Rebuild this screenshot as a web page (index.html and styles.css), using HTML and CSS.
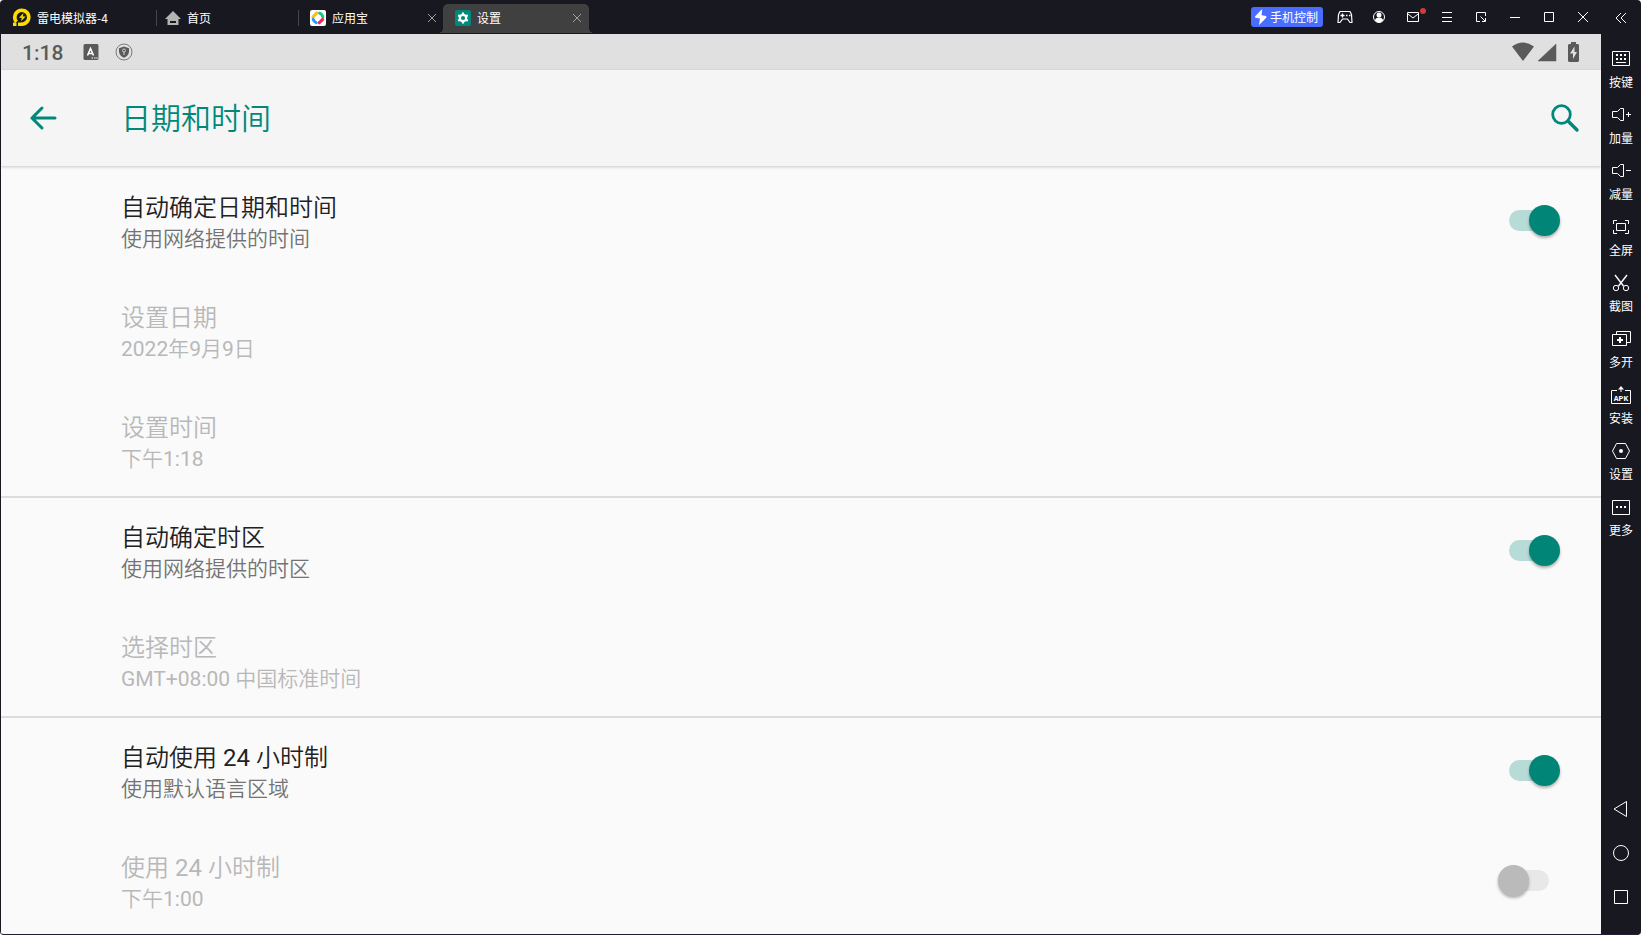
FILE: index.html
```html
<!DOCTYPE html>
<html lang="zh-CN">
<head>
<meta charset="utf-8">
<title>设置</title>
<link rel="stylesheet" href="styles.css">
</head>
<body>
<div class="window">
  <header class="titlebar">
    <div class="brand">
      <svg width="20" height="20" viewBox="0 0 20 20"><path d="M4.500 13.800A7 7 0 1 1 10.500 16.200H9" fill="none" stroke="#ffdc00" stroke-width="3.600"/><path d="M1 14.500h3.500V18H1zM6 14.500h4V18H6z" fill="#ffdc00"/><path d="M11.500 5 7 9.800h2.800L9 13.300 13.700 8.600h-3z" fill="#ffdc00"/></svg>
      <span>雷电模拟器-4</span>
    </div>
    <nav class="tabs">
      <div class="tab tab-home">
        <svg width="16" height="16" viewBox="0 0 16 16"><path d="M8 1 0 9h2.500v6h11V9H16z" fill="#b4b4b4"/><path d="M5 12h6" stroke="#171820" stroke-width="2"/></svg>
        <span>首页</span>
      </div>
      <div class="tab tab-store">
        <svg width="16" height="16" viewBox="0 0 16 16"><rect width="16" height="16" rx="2" fill="#fff"/><path d="M3 6.800 6.800 3" stroke="#ffc400" stroke-width="3.200" stroke-linecap="round"/><path d="M9.600 3.200A5 5 0 0 1 12.800 7" stroke="#12c98a" stroke-width="3" fill="none" stroke-linecap="round"/><path d="M12.600 9.500 9.300 12.700" stroke="#f3265d" stroke-width="3.200" stroke-linecap="round"/><path d="M3.200 9.300A5 5 0 0 0 6.200 12.600" stroke="#2497ff" stroke-width="3" fill="none" stroke-linecap="round"/><path d="M8 4.500 11.500 8 8 11.500 4.500 8z" fill="#fff"/></svg>
        <span class="tab-name">应用宝</span>
        <button class="tab-close" aria-label="关闭应用宝"><svg width="10" height="10" viewBox="0 0 10 10"><path d="m1 1 8 8M9 1 1 9"/></svg></button>
      </div>
      <div class="tab tab-active">
        <svg width="16" height="16" viewBox="0 0 16 16"><rect width="16" height="16" rx="2" fill="#00897b"/><circle cx="8" cy="8" r="3.200" fill="none" stroke="#fff" stroke-width="2.200"/><path d="M8 2.500v2M8 11.500v2M3.200 5.200l1.800 1M11 9.800l1.800 1M3.200 10.800l1.800-1M11 6.200l1.800-1" stroke="#fff" stroke-width="2.200"/></svg>
        <span class="tab-name">设置</span>
        <button class="tab-close" aria-label="关闭设置"><svg width="10" height="10" viewBox="0 0 10 10"><path d="m1 1 8 8M9 1 1 9"/></svg></button>
      </div>
    </nav>
    <div class="tools">
      <button class="phone"><svg width="14" height="16" viewBox="0 0 14 16"><path d="M8.200 0 1 7.500l.3 1.300L6 9.600 5 16l7.500-7.600-.4-1.300L7.600 6.200z" fill="#fff"/></svg><span>手机控制</span></button>
      <button class="tool" aria-label="手柄"><svg width="20" height="20" viewBox="0 0 20 20"><path d="M5 4.500h10l1.500 3 .5 8h-2L12.500 12h-5L5 15.500H3l.5-8z" stroke-width="1.200" stroke-linejoin="round"/><path d="M5.500 8.500h4M7.500 6.500v4M11 8.500h1.500M14 8.500h1.500" stroke-width="1.300"/></svg></button>
      <button class="tool" aria-label="账号"><svg width="20" height="20" viewBox="0 0 20 20"><circle cx="10" cy="10" r="5.500"/><circle cx="10" cy="8" r="2.500" fill="#fff" stroke="none"/><path d="M6 13.500c0-4 8-4 8 0-2 2.500-6 2.500-8 0z" fill="#fff" stroke="none"/></svg></button>
      <button class="tool" aria-label="消息"><svg width="20" height="20" viewBox="0 0 20 20"><path d="M4.500 5.500h11v9h-11zM5 7l5 4 5-4"/><circle cx="20" cy="4" r="3" fill="#d03a38" stroke="none"/></svg></button>
      <button class="tool" aria-label="菜单"><svg width="20" height="20" viewBox="0 0 20 20"><path d="M5 5.500h10M5 10.500h10M5 14.500h10"/></svg></button>
      <button class="tool" aria-label="小窗"><svg width="20" height="20" viewBox="0 0 20 20"><path d="M9 14.500H5.500v-9h9V9M9.500 9.500l4.500 4.500M14.500 11v3.500H11"/></svg></button>
      <button class="tool" aria-label="最小化"><svg width="20" height="20" viewBox="0 0 20 20"><path d="M5 10.500h10"/></svg></button>
      <button class="tool" aria-label="最大化"><svg width="20" height="20" viewBox="0 0 20 20"><path d="M5.500 5.500h9v9h-9z"/></svg></button>
      <button class="tool" aria-label="关闭"><svg width="20" height="20" viewBox="0 0 20 20"><path d="m5 5 10 10M15 5 5 15"/></svg></button>
      <button class="tool tool-fold" aria-label="收起"><svg width="20" height="20" viewBox="0 0 20 20"><path d="m10 6-5 5 5 5M15 6l-5 5 5 5"/></svg></button>
    </div>
  </header>

  <div class="body">
    <main class="screen">
      <div class="status">
        <span class="clock">1:18</span>
        <svg class="status-input" width="16" height="16" viewBox="0 0 16 16"><path d="M2 0h12a1.500 1.500 0 0 1 1.500 1.500v13A1.500 1.500 0 0 1 14 16H2a1.500 1.500 0 0 1-1.500-1.500v-13A1.500 1.500 0 0 1 2 0z" fill="#5a5a5a"/><path d="M4.500 11.500 7.500 4.500l3 7M5.500 9.500h4" fill="none" stroke="#fff" stroke-width="1.600"/><path d="M8.500 14h1.500M11 14h1.500M13.300 14h1.500" stroke="#fff"/></svg>
        <svg class="status-shield" width="18" height="18" viewBox="0 0 18 18"><circle cx="9" cy="9" r="8" fill="none" stroke="#7a7a7a"/><path d="M9 3.500 4 5.200v3.300c0 3 2.200 5 5 6.200 2.800-1.200 5-3.200 5-6.200V5.200z" fill="#5a5a5a"/><circle cx="9" cy="7.500" r="1.500" fill="none" stroke="#d0d0d0"/><path d="M9 9v3" stroke="#d0d0d0"/></svg>
        <div class="signals">
          <svg width="22" height="20" viewBox="0 0 22 20"><path d="M0 4.500Q11-3.500 22 4.500L11 19z" fill="#5a5a5a"/></svg>
          <svg width="18" height="20" viewBox="0 0 18 20"><path d="M18 2v17H0z" fill="#5a5a5a" stroke="#5a5a5a" stroke-linejoin="round" stroke-width="0.500"/></svg>
          <svg class="battery" width="11" height="20" viewBox="0 0 11 20"><path d="M3 0h5v2h2l1 1v16l-1 1H1l-1-1V3l1-1h2z" fill="#5a5a5a"/><path d="M6.500 4.500 2 11.500h3v5.500l4-7H6.500z" fill="#e0e0e0"/></svg>
        </div>
      </div>
      <div class="appbar">
        <button class="back" aria-label="返回"><svg width="28" height="24" viewBox="0 0 28 24"><path d="M26 12H3M13 2 3 12l10 10" fill="none" stroke="#00897b" stroke-width="3" stroke-linecap="round"/></svg></button>
        <h1>日期和时间</h1>
        <button class="search" aria-label="搜索"><svg width="28" height="28" viewBox="0 0 28 28"><circle cx="10.500" cy="10.500" r="8.800" fill="none" stroke="#00897b" stroke-width="2.800"/><path d="m17 17 9 9" stroke="#00897b" stroke-width="3.400" stroke-linecap="round"/></svg></button>
      </div>
      <div class="list">
        <section class="group">
          <label class="row" for="auto-date"><span class="texts"><span class="name">自动确定日期和时间</span><span class="note">使用网络提供的时间</span></span><input class="switch" type="checkbox" id="auto-date" checked></label>
          <button class="row" disabled><span class="texts"><span class="name">设置日期</span><span class="note">2022年9月9日</span></span></button>
          <button class="row" disabled><span class="texts"><span class="name">设置时间</span><span class="note">下午1:18</span></span></button>
        </section>
        <section class="group">
          <label class="row" for="auto-zone"><span class="texts"><span class="name">自动确定时区</span><span class="note">使用网络提供的时区</span></span><input class="switch" type="checkbox" id="auto-zone" checked></label>
          <button class="row" disabled><span class="texts"><span class="name">选择时区</span><span class="note">GMT+08:00 中国标准时间</span></span></button>
        </section>
        <section class="group">
          <label class="row" for="auto-24"><span class="texts"><span class="name">自动使用 24 小时制</span><span class="note">使用默认语言区域</span></span><input class="switch" type="checkbox" id="auto-24" checked></label>
          <label class="row row-off" for="use-24"><span class="texts"><span class="name">使用 24 小时制</span><span class="note">下午1:00</span></span><input class="switch" type="checkbox" id="use-24" disabled></label>
        </section>
      </div>
    </main>

    <aside class="sidebar">
      <button class="side"><svg width="24" height="20" viewBox="0 0 24 20"><path d="M3.500 3.500h17v14h-17zM7 14.500h10"/><path d="M7 7h2M11 7h2M15 7h2M7 11h2M11 11h2M15 11h2" stroke-width="2"/></svg><span>按键</span></button>
      <button class="side"><svg width="24" height="20" viewBox="0 0 24 20"><path d="M3.500 7.500h5l3-3h3v12h-3l-3-3h-5zM17 10.500h5M19.500 8v5"/></svg><span>加量</span></button>
      <button class="side"><svg width="24" height="20" viewBox="0 0 24 20"><path d="M3.500 7.500h5l3-3h3v12h-3l-3-3h-5zM17 10.500h5"/></svg><span>减量</span></button>
      <button class="side"><svg width="24" height="20" viewBox="0 0 24 20"><path d="M4.500 8V4.500H8M16 4.500h3.500V8M19.500 14v3.500H16M8 17.500H4.500V14M7.500 7.500h9v7h-9z"/></svg><span>全屏</span></button>
      <button class="side"><svg width="24" height="20" viewBox="0 0 24 20"><path d="m6 3 8.500 11M18 3 9.500 14" stroke-width="1.400"/><circle cx="7" cy="16" r="2.700"/><circle cx="17" cy="16" r="2.700"/></svg><span>截图</span></button>
      <button class="side"><svg width="24" height="20" viewBox="0 0 24 20"><path d="M3.500 6.500h14v11h-14zM7.500 6V3.500h14v11H18"/><path d="M8 12h6M11 9v6" stroke-width="2"/></svg><span>多开</span></button>
      <button class="side"><svg width="24" height="20" viewBox="0 0 24 20"><path d="M8 6.500H2.500v13h19v-13H16M12 8V3"/><path d="M9 5.500 12 2l3 3.500z" fill="#fff" stroke="none"/><text x="12" y="17" text-anchor="middle" class="apk">APK</text></svg><span>安装</span></button>
      <button class="side"><svg width="24" height="20" viewBox="0 0 24 20"><path d="M7.500 3.500h9l4 7.500-4 7.500h-9L3.500 11z"/><circle cx="12" cy="11" r="2" fill="#fff" stroke="none"/></svg><span>设置</span></button>
      <button class="side"><svg width="24" height="20" viewBox="0 0 24 20"><path d="M3.500 4.500h17v14h-17z"/><path d="M7 11h2M11 11h2M15 11h2" stroke-width="2"/></svg><span>更多</span></button>
      <div class="navkeys">
        <button class="navkey" aria-label="返回键"><svg width="20" height="20" viewBox="0 0 20 20"><path d="M15.500 2.500v15L3 10z"/></svg></button>
        <button class="navkey" aria-label="主页键"><svg width="20" height="20" viewBox="0 0 20 20"><circle cx="10" cy="10" r="7.500"/></svg></button>
        <button class="navkey" aria-label="任务键"><svg width="20" height="20" viewBox="0 0 20 20"><path d="M3.500 3.500h13v13h-13z"/></svg></button>
      </div>
    </aside>
  </div>
</div>
</body>
</html>
```
FILE: styles.css
```css
* { box-sizing: border-box; }
body {
  margin: 0;
  background: #fff;
  font-family: Roboto, "Noto Sans CJK SC DemiLight", "Noto Sans CJK SC", sans-serif;
}
button {
  margin: 0;
  padding: 0;
  border: 0;
  background: none;
  color: inherit;
  font: inherit;
  text-align: left;
}
svg { display: block; flex: none; overflow: visible; }

.window {
  display: flex;
  flex-direction: column;
  height: 100vh;
  overflow: hidden;
  border-radius: 4px;
  border-bottom: 1px solid #211d38;
  background: #171820;
}

/* Title bar */
.titlebar {
  display: flex;
  flex: none;
  height: 34px;
  color: #fff;
  font-family: "Noto Sans CJK SC", sans-serif;
  font-size: 12px;
  line-height: 16px;
}
.brand {
  display: flex;
  align-items: center;
  gap: 5px;
  width: 156px;
  padding: 1px 0 0 12px;
}
.tabs { display: flex; flex: 1; }
.tab {
  display: flex;
  align-items: center;
  gap: 6px;
  position: relative;
  padding-top: 1px;
}
.tab-home { width: 142px; padding-left: 9px; }
.tab-store { width: 145px; padding: 1px 6px 0 12px; }
.tab-home::before, .tab-store::before {
  content: "";
  position: absolute;
  left: 0;
  top: 10px;
  width: 1px;
  height: 16px;
  background: #45464c;
}
.tab-active {
  width: 146px;
  margin: 4px 0 1px;
  padding: 0 7px 1px 12px;
  border-radius: 5px 5px 0 0;
  background: #404040;
}
.tab-active::before, .tab-active::after {
  content: "";
  position: absolute;
  bottom: 0;
  width: 5px;
  height: 5px;
}
.tab-active::before { left: -5px; background: radial-gradient(circle at 0 0, transparent 5px, #404040 5px); }
.tab-active::after { right: -5px; background: radial-gradient(circle at 100% 0, transparent 5px, #404040 5px); }
.tab-name { flex: 1; }
.tab-close svg { fill: none; stroke: #a0a0a0; }
.tools { display: flex; align-items: center; }
.phone {
  display: flex;
  align-items: center;
  gap: 2px;
  width: 72px;
  height: 20px;
  margin: 0 5px 0 0;
  padding-left: 3px;
  border-radius: 3px;
  background: #4b6dff;
}
.tool { display: grid; place-items: center; width: 34px; height: 34px; }
.tool-fold { width: 40px; margin-left: 1px; }
.tool svg, .side svg, .navkey svg { fill: none; stroke: #fff; }

.body { display: flex; flex: 1; min-height: 0; }

/* Android screen */
.screen {
  display: flex;
  flex: 1;
  flex-direction: column;
  min-width: 0;
  margin-left: 1px;
  background: #fafafa;
}
.status {
  display: flex;
  flex: none;
  align-items: center;
  height: 36px;
  padding: 0 22px 0 21px;
  background: #e0e0e0;
  color: #5a5a5a;
}
.clock { font-size: 21px; font-weight: 500; line-height: 24px; padding-top: 1px; }
.status-input { margin-left: 20px; }
.status-shield { margin-left: 16px; }
.signals { display: flex; align-items: center; gap: 4px; margin-left: auto; }
.battery { margin-left: 8px; }
.appbar {
  display: flex;
  flex: none;
  align-items: center;
  position: relative;
  height: 96px;
  padding: 0 22px 0 28px;
  background: #f5f5f5;
  box-shadow: 0 1px 3px rgba(0, 0, 0, 0.2);
  color: #00897b;
}
.appbar h1 {
  flex: 1;
  margin: 0 0 0 64px;
  padding-top: 2px;
  font-size: 30px;
  font-weight: 400;
  line-height: 40px;
}
.list { flex: 1; min-height: 0; overflow-y: auto; scrollbar-width: none; }
.group + .group { box-shadow: inset 0 2px #dcdcdc; }
.row {
  display: flex;
  align-items: center;
  justify-content: space-between;
  width: 100%;
  height: 110px;
  padding: 0 41px 1px 120px;
  color: #212121;
}
.texts { display: grid; padding-top: 4px; }
.name { font-size: 24px; line-height: 32px; }
.note { color: #737373; font-size: 21px; line-height: 30px; }
.row:disabled, .row:disabled .note, .row-off, .row-off .note { color: #b8b8b8; }

.switch {
  appearance: none;
  display: grid;
  align-items: center;
  width: 62px;
  height: 31px;
  margin: 0;
}
.switch::before, .switch::after { content: ""; grid-area: 1 / 1; }
.switch::before {
  height: 21px;
  margin: 0 11px;
  border-radius: 11px;
  background: #b7dcd8;
}
.switch::after {
  justify-self: end;
  width: 31px;
  height: 31px;
  border-radius: 50%;
  background: #008577;
  box-shadow: 0 2px 3px rgba(0, 0, 0, 0.3);
}
.switch:disabled::before { background: #e8e8e8; }
.switch:disabled::after { justify-self: start; background: #bababa; }

/* Emulator tool column */
.sidebar {
  display: flex;
  flex: none;
  flex-direction: column;
  align-items: center;
  gap: 14px;
  width: 40px;
  padding: 14px 0 27px;
  color: #fff;
  font-family: "Noto Sans CJK SC", sans-serif;
  font-size: 12px;
  line-height: 16px;
}
.side { display: grid; justify-items: center; gap: 6px; }
.apk { fill: #fff; stroke: none; font-family: "Liberation Mono", monospace; font-size: 8px; font-weight: 700; }
.navkeys { display: grid; gap: 24px; margin-top: auto; }
```
